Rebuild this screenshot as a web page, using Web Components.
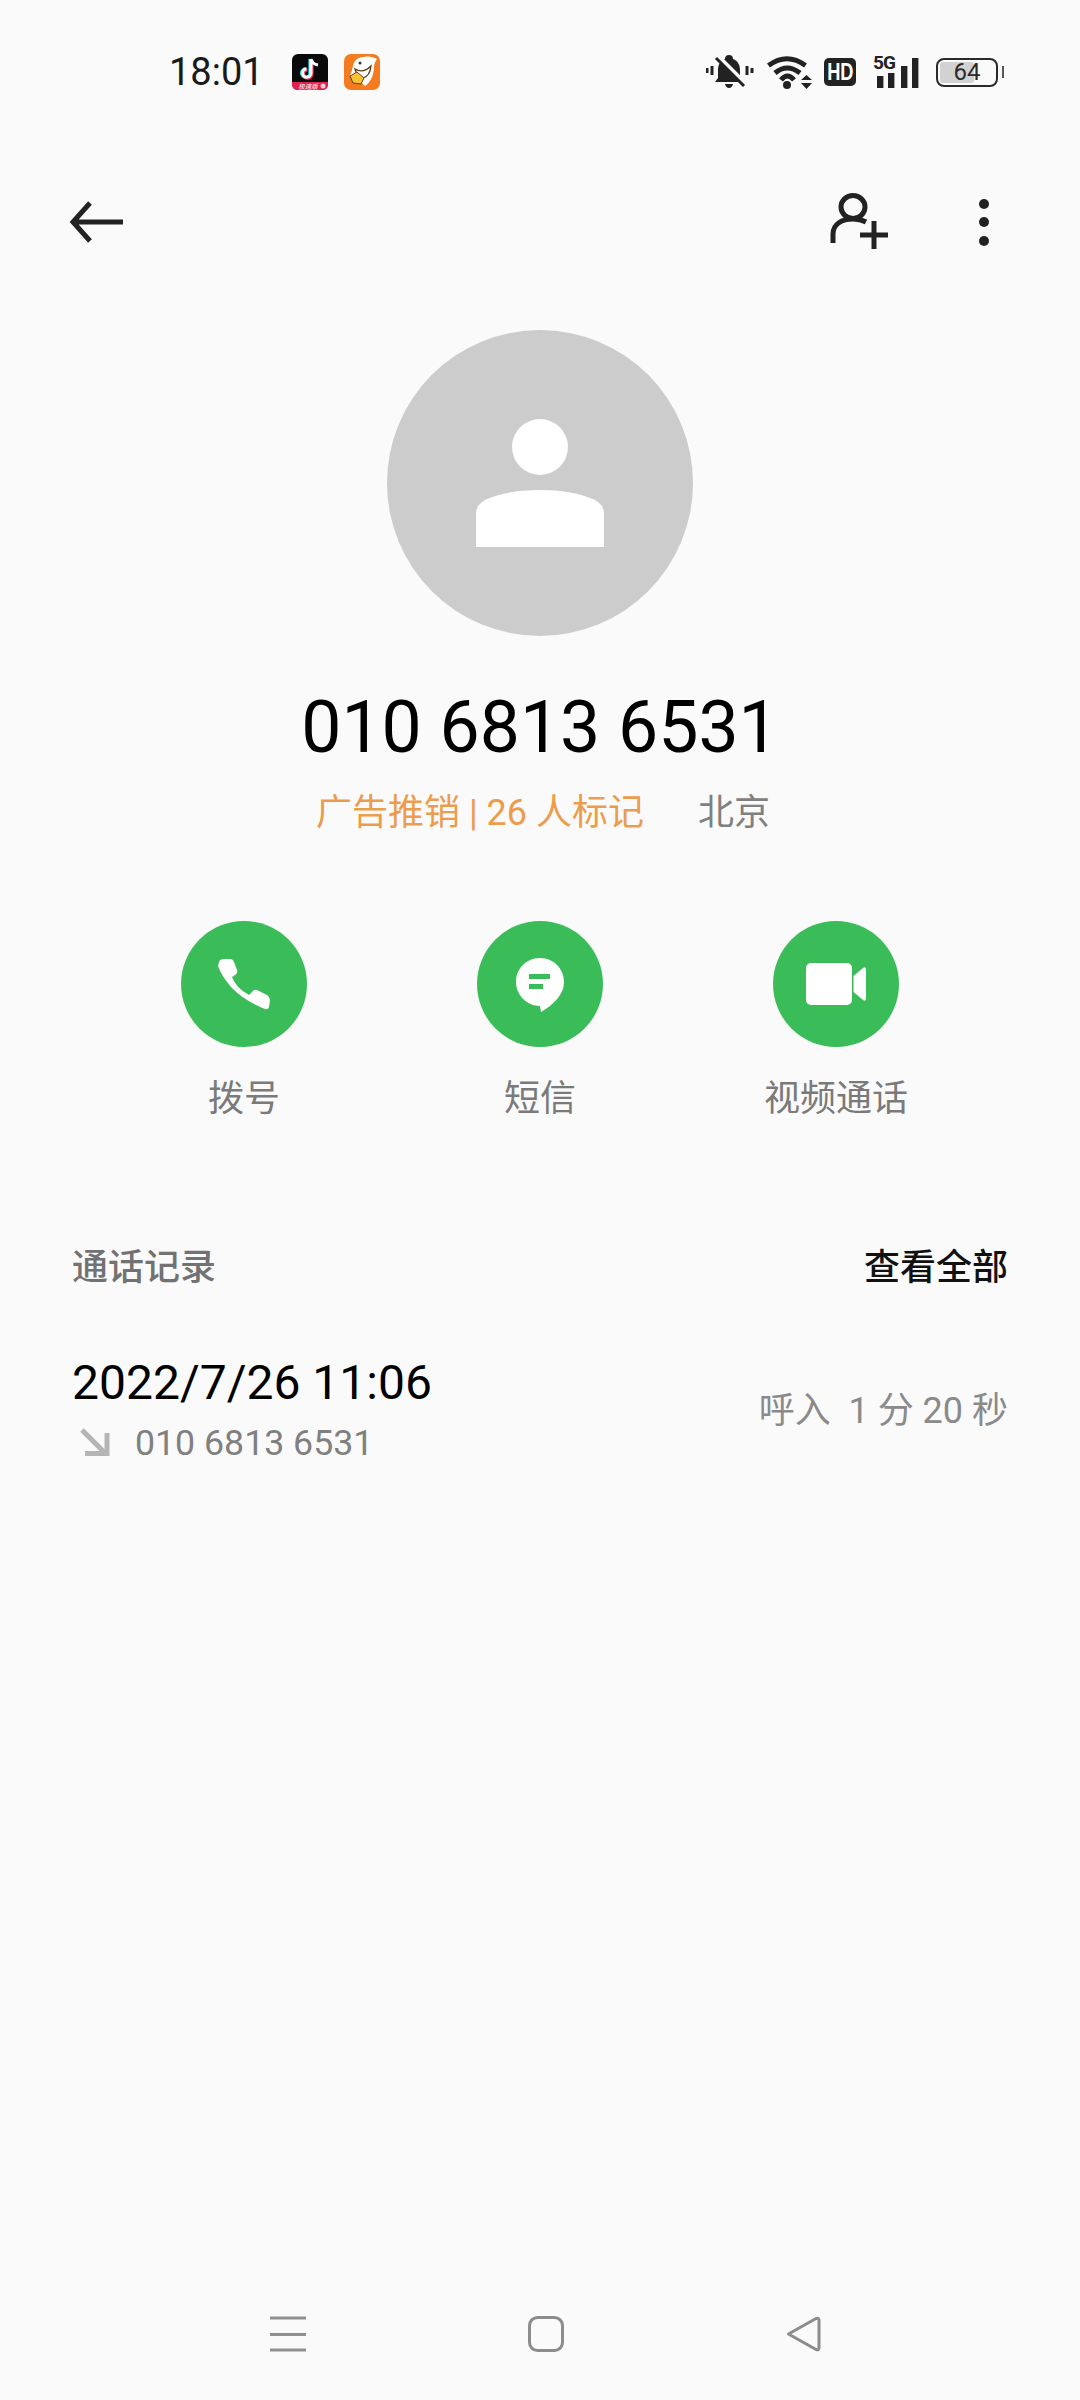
<!DOCTYPE html>
<html>
<head>
<meta charset="utf-8">
<style>
  html, body { margin: 0; padding: 0; background: #fafafa; }
  body { font-family: Roboto, "Noto Sans CJK SC", sans-serif; }
</style>
</head>
<body>
<contact-page>
  <status-bar time="18:01"></status-bar>
  <tool-bar></tool-bar>
  <contact-head number="010 6813 6531" tag="广告推销 | 26 人标记" place="北京"></contact-head>
  <action-row>
    <action-button label="拨号">
      <svg viewBox="0 0 126 126" width="126" height="126"><path fill="#fff" d="M38 41Q39 38 43 38L49 38Q52 38 53 41L56 49Q57 52 54 54L51 56Q55 67 68 74L71 71Q73 68 76 69L86 74Q89 76 89 79L88 86Q87 89 84 88Q62 79 50 66Q40 54 37 45Z"/></svg>
    </action-button>
    <action-button label="短信">
      <svg viewBox="0 0 126 126" width="126" height="126"><path fill="#fff" d="M63 37C77 37 87 48 87 61C87 74 76 84 64 91L63 85C50 85 39 74 39 61C39 48 49 37 63 37Z"/><path fill="#3abd58" d="M52 53H73V58H52ZM52 63H66V68H52Z"/></svg>
    </action-button>
    <action-button label="视频通话">
      <svg viewBox="0 0 126 126" width="126" height="126"><rect x="33" y="42" width="46" height="42" rx="5" fill="#fff"/><path fill="#fff" d="M80.500 55L90 47Q93 45 93 49V77Q93 81 90 79L80.500 71Z"/></svg>
    </action-button>
  </action-row>
  <section-head title="通话记录" action="查看全部"></section-head>
  <call-row date="2022/7/26 11:06" number="010 6813 6531" info="呼入&nbsp; 1 分 20 秒"></call-row>
  <nav-bar></nav-bar>
</contact-page>

<script>
const pageTemplate = document.createElement('template')
pageTemplate.innerHTML = `
<style>
  :host { display: flex; flex-direction: column; height: 2400px; overflow: hidden; background: #fafafa; }
</style>
<slot></slot>
`
class ContactPage extends HTMLElement {
  constructor() {
    super()
    this.attachShadow({mode:'open'})
    this.shadowRoot.appendChild(pageTemplate.content.cloneNode(true))
  }
}
customElements.define('contact-page', ContactPage)

class StatusBar extends HTMLElement {
  constructor() {
    super()
    this.attachShadow({mode:'open'})
    this.shadowRoot.innerHTML = `
<style>
  :host { display: flex; align-items: center; height: 144px; padding: 0 0 0 169px; box-sizing: border-box; flex: none; }
  .time { font: 400 38px/44px Roboto, sans-serif; color: #1a1a1a; width: 123px; }
  .apps { display: flex; gap: 16px; }
  .right { display: flex; align-items: center; margin-left: auto; padding-right: 77px; }
  svg { display: block; flex: none; }
  .hd { width: 32px; height: 28px; margin-right: 16px; background: #222; color: #fff; border-radius: 5px; font: 700 24px/28px "Liberation Sans", sans-serif; text-align: center; overflow: hidden; }
  .hd span { display: inline-block; transform: scaleX(.76); margin: 0 -6px; }
  .sig { position: relative; margin-right: 16px; }
  .sig span { position: absolute; left: 1px; top: -2px; font: 700 19px/16px Roboto, sans-serif; letter-spacing: -1px; color: #222; white-space: nowrap; }
  .batt { position: relative; width: 62px; height: 29px; box-sizing: border-box; border: 2.500px solid #2a2a2a; border-radius: 8px; display: flex; align-items: center; justify-content: center; margin-right: 5px; }
  .batt i { position: absolute; left: 2px; top: 2px; bottom: 2px; width: 34px; background: #d2d2d2; border-radius: 3px; }
  .batt span { position: relative; font: 400 24px/24px Roboto, sans-serif; color: #2a2a2a; }
  .batt::after { content: ""; position: absolute; right: -8px; top: 6px; width: 2.500px; height: 12px; background: #555; }
</style>
<span class="time">${this.getAttribute('time')}</span>
<div class="apps">
  <svg width="36" height="36" viewBox="0 0 36 36">
    <rect width="36" height="36" rx="6" fill="#0a0a0a"/>
    <path d="M0 28H36V30Q36 36 30 36H6Q0 36 0 30Z" fill="#e0234e"/>
    <text x="16" y="34.500" font-size="6.500" font-style="italic" font-family="'Noto Sans CJK SC',sans-serif" fill="#fff" text-anchor="middle">极速版</text>
    <circle cx="31" cy="32" r="2.500" fill="#f7c9d2"/>
    <path d="M19 5V19A4.200 4.200 0 1 1 14.500 14.800" fill="none" stroke="#25f4ee" stroke-width="3.200" transform="translate(-1 0)"/>
    <path d="M19 5V19A4.200 4.200 0 1 1 14.500 14.800" fill="none" stroke="#fe2c55" stroke-width="3.200" transform="translate(1 1)"/>
    <path d="M19 5V19A4.200 4.200 0 1 1 14.500 14.800M19 5Q20 10 26 11" fill="none" stroke="#fff" stroke-width="3"/>
  </svg>
  <svg width="36" height="36" viewBox="0 0 36 36">
    <rect width="36" height="36" rx="7" fill="#f47b20"/>
    <path d="M9 12C10 6 15 3 20 3C25 2 29 3 33 5C31 8 30 10 30 13C30 20 27 28 21 32C19 30 18 29 16 27C12 27 8 24 6 21C8 18 8 15 9 12Z" fill="#fff"/>
    <path d="M11 15Q19 20 27 12Q26 22 19 24Q13 23 11 15Z" fill="#fff" stroke="#5a3518" stroke-width="1.300"/>
    <path d="M6 22L13 18L20 24L17 30L9 29Z" fill="#f7c332" stroke="#6b4318" stroke-width="1"/>
    <circle cx="16" cy="9" r="1.500" fill="#333"/>
  </svg>
</div>
<div class="right">
  <svg width="48" height="34" viewBox="0 0 48 34" style="margin-right:13px">
    <path fill="#222" d="M23 0Q27 0 27 4C32 6 34 10 34 15V23L37 27H9L12 23V15C12 10 14 6 19 4Q19 0 23 0Z"/>
    <path fill="#222" d="M19 29H27Q26 33 23 33Q20 33 19 29Z"/>
    <path d="M12 1L40 29" stroke="#fafafa" stroke-width="4"/>
    <path d="M10 3L38 31" stroke="#222" stroke-width="3"/>
    <path d="M1 13V18M6 11V20M41 11V20M46 13V18" stroke="#222" stroke-width="3"/>
  </svg>
  <svg width="46" height="33" viewBox="0 0 46 33" style="margin-right:11px">
    <path d="M1.500 9.500Q20 -4 38.500 9.500M8 17Q20 7 33 17M14 24Q20.500 16 27 24" fill="none" stroke="#222" stroke-width="5"/>
    <circle cx="20" cy="29" r="4" fill="#222"/>
    <path d="M34 24L39.500 19L45 24ZM34 27H45L39.500 33Z" fill="#222"/>
  </svg>
  <div class="hd"><span>HD</span></div>
  <div class="sig">
    <span>5G</span>
    <svg width="48" height="31" viewBox="0 0 48 31">
      <rect x="5" y="19" width="6.400" height="12" fill="#222"/>
      <rect x="16" y="16" width="6.400" height="15" fill="#222"/>
      <rect x="29" y="9" width="6.400" height="22" fill="#222"/>
      <rect x="40" y="1" width="6.400" height="30" fill="#222"/>
    </svg>
  </div>
  <div class="batt"><i></i><span>64</span></div>
</div>`
  }
}
customElements.define('status-bar', StatusBar)

const toolTemplate = document.createElement('template')
toolTemplate.innerHTML = `
<style>
  :host { display: flex; align-items: center; height: 156px; flex: none; padding: 0 91px 0 67px; box-sizing: border-box; }
  .end { margin-left: auto; display: flex; align-items: center; gap: 87px; }
  svg { display: block; }
</style>
<svg width="60" height="60" viewBox="0 0 60 60"><path d="M23 11L6 30L23 49M6 30H56" fill="none" stroke="#222" stroke-width="5"/></svg>
<div class="end">
  <svg width="64" height="60" viewBox="0 0 64 60"><g fill="none" stroke="#222" stroke-width="5"><ellipse cx="25" cy="15" rx="12" ry="11.500"/><path d="M5 51V42C5 32 14 27 25 27C31 27 34 28 38 30"/><path d="M32 43H60M46 29V57"/></g></svg>
  <svg width="10" height="48" viewBox="0 0 10 48"><g fill="#222"><circle cx="5" cy="6" r="5"/><circle cx="5" cy="24" r="5"/><circle cx="5" cy="43" r="5"/></g></svg>
</div>
`
class ToolBar extends HTMLElement {
  constructor() {
    super()
    this.attachShadow({mode:'open'})
    this.shadowRoot.appendChild(toolTemplate.content.cloneNode(true))
  }
}
customElements.define('tool-bar', ToolBar)

class ContactHead extends HTMLElement {
  constructor() {
    super()
    this.attachShadow({mode:'open'})
    this.shadowRoot.innerHTML = `
<style>
  :host { display: flex; flex-direction: column; align-items: center; padding-top: 30px; flex: none; }
  svg { display: block; }
  .num { margin-top: 47px; font: 400 71.500px/90px Roboto, sans-serif; color: #000; }
  .sub { margin-top: 15px; display: flex; gap: 54px; font: 400 36px/50px Roboto, "Noto Sans CJK SC", sans-serif; padding-left: 6px; }
  .tag { color: #ec9c4d; }
  .place { color: #808080; }
</style>
<svg width="306" height="306" viewBox="0 0 306 306">
  <circle cx="153" cy="153" r="153" fill="#cccccc"/>
  <circle cx="153" cy="117" r="28" fill="#fff"/>
  <path d="M89 217V184C89 176 94 172 100 169C115 163 132 160 153 160C174 160 191 163 206 169C212 172 217 176 217 184V217Z" fill="#fff"/>
</svg>
<div class="num">${this.getAttribute('number')}</div>
<div class="sub"><span class="tag">${this.getAttribute('tag')}</span><span class="place">${this.getAttribute('place')}</span></div>`
  }
}
customElements.define('contact-head', ContactHead)

const rowTemplate = document.createElement('template')
rowTemplate.innerHTML = `
<style>
  :host { display: flex; justify-content: center; margin-top: 83px; flex: none; }
</style>
<slot></slot>
`
class ActionRow extends HTMLElement {
  constructor() {
    super()
    this.attachShadow({mode:'open'})
    this.shadowRoot.appendChild(rowTemplate.content.cloneNode(true))
  }
}
customElements.define('action-row', ActionRow)

class ActionButton extends HTMLElement {
  constructor() {
    super()
    this.attachShadow({mode:'open'})
    this.shadowRoot.innerHTML = `
<style>
  :host { display: flex; flex-direction: column; align-items: center; width: 296px; }
  .circle { width: 126px; height: 126px; border-radius: 50%; background: #3abd58; }
  ::slotted(svg) { display: block; }
  .label { margin-top: 23px; font: 400 36px/50px "Noto Sans CJK SC", sans-serif; color: #7a7a7a; }
</style>
<div class="circle"><slot></slot></div>
<div class="label">${this.getAttribute('label')}</div>`
  }
}
customElements.define('action-button', ActionButton)

class SectionHead extends HTMLElement {
  constructor() {
    super()
    this.attachShadow({mode:'open'})
    this.shadowRoot.innerHTML = `
<style>
  :host { display: flex; justify-content: space-between; margin-top: 119px; padding: 0 72px; flex: none; font: 500 36px/50px "Noto Sans CJK SC", sans-serif; }
  .title { color: #727272; }
  .action { color: #111; }
</style>
<span class="title">${this.getAttribute('title')}</span>
<span class="action">${this.getAttribute('action')}</span>`
  }
}
customElements.define('section-head', SectionHead)

class CallRow extends HTMLElement {
  constructor() {
    super()
    this.attachShadow({mode:'open'})
    this.shadowRoot.innerHTML = `
<style>
  :host { display: flex; justify-content: space-between; align-items: center; margin-top: 64px; padding: 0 72px; flex: none; }
  .date { font: 400 48px/60px Roboto, sans-serif; color: #000; }
  .line { margin-top: 10px; display: flex; align-items: center; gap: 25px; font: 400 35.700px/40px Roboto, sans-serif; color: #808080; }
  svg { display: block; margin-left: 8px; }
  .info { padding-top: 6px; font: 400 36px/50px Roboto, "Noto Sans CJK SC", sans-serif; color: #8a8a8a; }
</style>
<div>
  <div class="date">${this.getAttribute('date')}</div>
  <div class="line">
    <svg width="30" height="30" viewBox="0 0 30 30"><path d="M2 2L26 26M5 25.500H27V5" fill="none" stroke="#b5b5b5" stroke-width="5"/></svg>
    <span>${this.getAttribute('number')}</span>
  </div>
</div>
<div class="info">${this.getAttribute('info')}</div>`
  }
}
customElements.define('call-row', CallRow)

const navTemplate = document.createElement('template')
navTemplate.innerHTML = `
<style>
  :host { display: flex; justify-content: center; align-items: center; height: 132px; margin-top: auto; padding-left: 12px; flex: none; }
  div { width: 258px; display: flex; justify-content: center; }
  svg { display: block; }
</style>
<div><svg width="36" height="36" viewBox="0 0 36 36"><path d="M0 2H36M0 18.500H36M0 34H36" stroke="#909090" stroke-width="3"/></svg></div>
<div><svg width="36" height="36" viewBox="0 0 36 36"><rect x="1.500" y="1.500" width="33" height="33" rx="8" fill="none" stroke="#8c8c8c" stroke-width="3"/></svg></div>
<div><svg width="36" height="36" viewBox="0 0 36 36"><path d="M2.500 18L30 2.500Q33 1.500 33 4.500V31.500Q33 34.500 30 33.500Z" fill="none" stroke="#8c8c8c" stroke-width="3" stroke-linejoin="round"/></svg></div>
`
class NavBar extends HTMLElement {
  constructor() {
    super()
    this.attachShadow({mode:'open'})
    this.shadowRoot.appendChild(navTemplate.content.cloneNode(true))
  }
}
customElements.define('nav-bar', NavBar)
</script>
</body>
</html>
